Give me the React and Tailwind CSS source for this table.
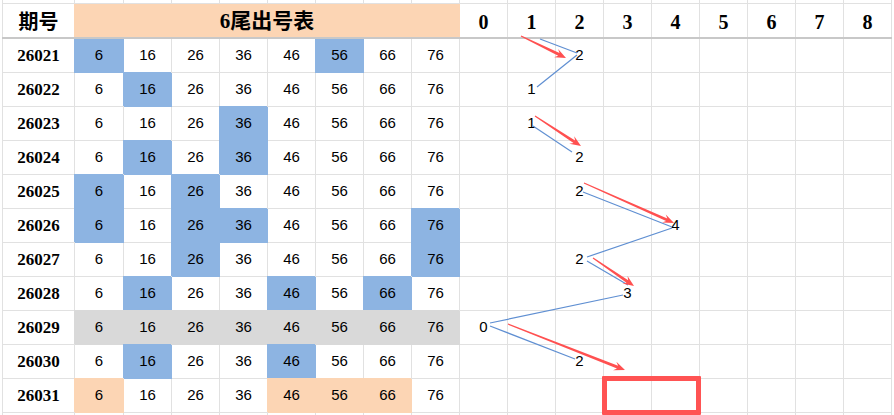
import React from 'react';

// 6尾出号表 - spreadsheet style trend chart
const NUMS = [6, 16, 26, 36, 46, 56, 66, 76];
const DIGITS = [0, 1, 2, 3, 4, 5, 6, 7, 8];

const ROWS = [
  { id: '26021', hits: [0, 5], fill: 'b', val: 2 },
  { id: '26022', hits: [1], fill: 'b', val: 1 },
  { id: '26023', hits: [3], fill: 'b', val: 1 },
  { id: '26024', hits: [1, 3], fill: 'b', val: 2 },
  { id: '26025', hits: [0, 2], fill: 'b', val: 2 },
  { id: '26026', hits: [0, 2, 3, 7], fill: 'b', val: 4 },
  { id: '26027', hits: [2, 7], fill: 'b', val: 2 },
  { id: '26028', hits: [1, 4, 6], fill: 'b', val: 3 },
  { id: '26029', hits: [0, 1, 2, 3, 4, 5, 6, 7], fill: 'g', val: 0 },
  { id: '26030', hits: [1, 4], fill: 'b', val: 2 },
  { id: '26031', hits: [0, 4, 5, 6], fill: 'o', val: null },
];

const FILL = {
  b: 'bg-[#8db4e2] border-[#8db4e2]',
  g: 'bg-[#d9d9d9] border-[#d9d9d9]',
  o: 'bg-[#fcd5b4] border-[#fcd5b4]',
};
// cover neighbour grid lines on the left and top
const COVER = {
  b: 'shadow-[-1px_-1px_0_0_#8db4e2]',
  g: 'shadow-[-1px_-1px_0_0_#d9d9d9]',
  o: 'shadow-[-1px_-1px_0_0_#fcd5b4]',
};
const COVER_LEFT = {
  b: 'shadow-[-1px_0_0_0_#8db4e2]',
  g: 'shadow-[-1px_0_0_0_#d9d9d9]',
  o: 'shadow-[-1px_0_0_0_#fcd5b4]',
};

const numFont = "font-['Liberation_Sans',sans-serif] text-[15px] text-black";
const boldSerif = "font-['Liberation_Serif','Noto_Sans_CJK_SC',serif] font-bold text-black";

const colW = (i) => (i === 0 ? 'w-[49px]' : 'w-[48px]');

const BLUE = [
  [540, 39, 577, 53],
  [577, 55, 537, 87],
  [533, 126, 572, 152],
  [583, 192, 672, 227],
  [672, 228, 587, 257],
  [587, 261, 628, 285],
  [623, 295, 490, 323],
  [490, 326, 575, 359],
];

const RED = [
  [521, 36, 566, 58],
  [535, 116, 581, 146],
  [584, 183, 674, 223],
  [593, 258, 634, 286],
  [508, 324, 625, 370],
];

// tapered arrow with a narrow notched head
const arrowPoints = ([x1, y1, x2, y2]) => {
  const dx = x2 - x1;
  const dy = y2 - y1;
  const len = Math.hypot(dx, dy);
  const ux = dx / len;
  const uy = dy / len;
  const nx = -uy;
  const ny = ux;
  const bx = x2 - ux * 11;
  const by = y2 - uy * 11;
  const sx = x2 - ux * 8;
  const sy = y2 - uy * 8;
  const p = [
    [x1 + nx * 0.6, y1 + ny * 0.6],
    [sx + nx * 1.5, sy + ny * 1.5],
    [bx + nx * 4.5, by + ny * 4.5],
    [x2, y2],
    [bx - nx * 4.5, by - ny * 4.5],
    [sx - nx * 1.5, sy - ny * 1.5],
    [x1 - nx * 0.6, y1 - ny * 0.6],
  ];
  return p.map((q) => q.map((v) => v.toFixed(1)).join(',')).join(' ');
};

const TrendLines = () => (
  <svg className="absolute inset-0 pointer-events-none" width="894" height="415" viewBox="0 0 894 415">
    {BLUE.map(([x1, y1, x2, y2], i) => (
      <line key={i} x1={x1} y1={y1} x2={x2} y2={y2} stroke="#5f8fd2" strokeWidth="1.2" />
    ))}
    {RED.map((a, i) => (
      <polygon key={i} points={arrowPoints(a)} fill="#ff5050" />
    ))}
  </svg>
);

export default function App() {
  return (
    <div className="relative w-[894px] h-[415px] overflow-hidden bg-white pl-[2px] flex flex-col">
      {/* top strip */}
      <div className="flex h-[4px] shrink-0">
        <div className="w-[73px] border-l border-r border-b border-[#e1e1e1]" />
        {NUMS.map((n, i) => (
          <div key={n} className={`${colW(i)} border-r border-b border-[#e1e1e1]`} />
        ))}
        {DIGITS.map((d) => (
          <div key={d} className="w-[48px] border-r border-b border-[#e1e1e1]" />
        ))}
      </div>

      {/* header */}
      <div className="flex h-[35px] shrink-0 border-b-2 border-[#c8c8c8] w-[890px]">
        <div className={`w-[73px] border-l border-r border-[#e1e1e1] flex items-center justify-center pt-[2px] text-[20px] ${boldSerif}`}>
          期号
        </div>
        <div className={`w-[385px] bg-[#fcd5b4] border-r border-[#fcd5b4] shadow-[-1px_0_0_0_#fcd5b4] flex items-center justify-center pt-[2px] text-[21px] ${boldSerif}`}>
          6尾出号表
        </div>
        {DIGITS.map((d) => (
          <div key={d} className={`w-[48px] border-r border-[#e1e1e1] flex items-center justify-center pt-[2px] text-[20px] ${boldSerif}`}>
            {d}
          </div>
        ))}
      </div>

      {/* data rows */}
      {ROWS.map((row, r) => (
        <div key={row.id} className="flex h-[34px] shrink-0">
          <div className={`w-[73px] border-l border-r border-b border-[#e1e1e1] flex items-center justify-center text-[17px] ${boldSerif}`}>
            {row.id}
          </div>
          {NUMS.map((n, i) => {
            const hit = row.hits.includes(i);
            const cls = hit
              ? `${FILL[row.fill]} ${r === 0 ? COVER_LEFT[row.fill] : COVER[row.fill]}`
              : 'border-[#e1e1e1]';
            return (
              <div key={n} className={`${colW(i)} border-r border-b ${cls} flex items-center justify-center ${numFont}`}>
                {n}
              </div>
            );
          })}
          {DIGITS.map((d) => (
            <div key={d} className={`w-[48px] border-r border-b border-[#e1e1e1] flex items-center justify-center ${numFont}`}>
              {row.val === d ? d : ''}
            </div>
          ))}
        </div>
      ))}

      {/* remainder below last row */}
      <div className="flex flex-1">
        <div className="w-[73px] border-l border-r border-[#e1e1e1]" />
        {NUMS.map((n, i) => (
          <div key={n} className={`${colW(i)} border-r border-[#e1e1e1]`} />
        ))}
        {DIGITS.map((d) => (
          <div key={d} className="w-[48px] border-r border-[#e1e1e1]" />
        ))}
      </div>

      <TrendLines />

      {/* highlight box for the next draw */}
      <div className="absolute left-[602px] top-[376px] w-[99px] h-[39px] border-[5px] border-[#ff5353] rounded-[1px]" />
    </div>
  );
}
